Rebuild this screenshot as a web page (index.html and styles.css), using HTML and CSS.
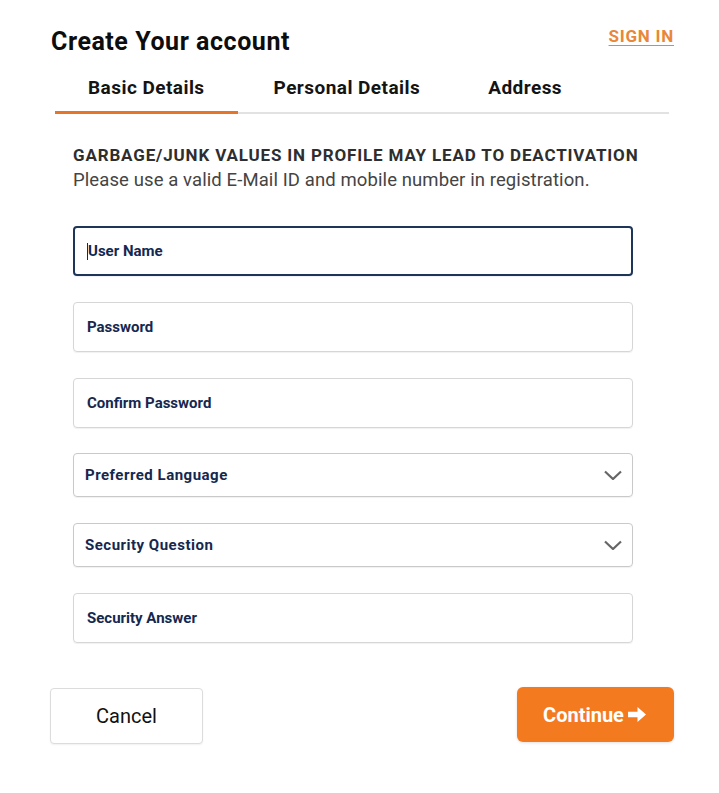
FILE: index.html
```html
<!DOCTYPE html>
<html lang="en">
<head>
<meta charset="utf-8">
<title>Create Your account</title>
<link rel="stylesheet" href="styles.css">
</head>
<body>
<div class="page">
  <header class="head">
    <h1 class="title">Create Your account</h1>
    <a class="signin" href="#">SIGN IN</a>
  </header>
  <nav class="tabs">
    <div class="tab active">Basic Details</div>
    <div class="tab">Personal Details</div>
    <div class="tab">Address</div>
  </nav>
  <section class="form">
    <p class="warn">GARBAGE/JUNK VALUES IN PROFILE MAY LEAD TO DEACTIVATION</p>
    <p class="note">Please use a valid E-Mail ID and mobile number in registration.</p>
    <div class="fields">
      <div class="field tall focus"><span class="caret"></span>User Name</div>
      <div class="field tall">Password</div>
      <div class="field tall">Confirm Password</div>
      <div class="field select first-select">Preferred Language
        <svg class="chev" width="18" height="10" viewBox="0 0 18 10"><path d="M1 1.5 L9 9 L17 1.5" fill="none" stroke="#666" stroke-width="2.2"/></svg>
      </div>
      <div class="field select">Security Question
        <svg class="chev" width="18" height="10" viewBox="0 0 18 10"><path d="M1 1.5 L9 9 L17 1.5" fill="none" stroke="#666" stroke-width="2.2"/></svg>
      </div>
      <div class="field tall">Security Answer</div>
    </div>
  </section>
  <footer class="actions">
    <button class="btn cancel">Cancel</button>
    <button class="btn continue">Continue
      <svg width="21" height="17" viewBox="0 0 22 18"><path d="M1 6 H11 V1 L20 9 L11 17 V12 H1 Z" fill="#fff"/></svg>
    </button>
  </footer>
</div>
</body>
</html>
```
FILE: styles.css
```css
* { box-sizing: border-box; }
html, body { margin: 0; background: #fff; }
body { font-family: Roboto, "Noto Sans", Arial, sans-serif; color: #111; }
.page { width: 719px; height: 793px; padding: 26px 45px 0 51px; }
.head { display: flex; justify-content: space-between; align-items: flex-start; }
.title { margin: 0; font-size: 25px; font-weight: 700; line-height: 32px; letter-spacing: 0.55px; color: #0d0d0d; }
.signin { font-size: 17px; font-weight: 700; color: #e8873a; text-decoration: underline; text-underline-offset: 3px; line-height: 20px; letter-spacing: 0.75px; margin-top: 0; }
.tabs { display: flex; margin: 12px 5px 0 4px; border-bottom: 2px solid #e2e2e2; }
.tab { padding: 6px 33px 11px 33px; font-size: 19px; font-weight: 700; color: #141414; line-height: 24px; letter-spacing: 0.45px; margin-bottom: -2px; border-bottom: 3px solid transparent; }
.tab:nth-child(2) { padding-left: 36px; }
.tab:nth-child(3) { padding-left: 35px; }
.tab.active { border-bottom-color: #e6752a; }
.form { padding: 0 0 0 22px; width: 582px; }
.warn { margin: 31px 0 0; font-size: 17px; font-weight: 700; color: #2e2e2e; letter-spacing: 0.84px; line-height: 20px; white-space: nowrap; }
.note { margin: 4px 0 0; font-size: 18.5px; color: #444; line-height: 22px; letter-spacing: 0.1px; white-space: nowrap; }
.fields { display: flex; flex-direction: column; gap: 26px; margin-top: 35px; width: 560px; }
.field { position: relative; display: flex; align-items: center; border: 1px solid #d6d6d6; border-radius: 4px; padding: 0 13px; font-size: 15px; font-weight: 700; color: #142850; box-shadow: 0 1px 1px rgba(0,0,0,0.06); }
.field.tall { height: 50px; }
.field.select { height: 44px; padding: 0 10px 0 11px; justify-content: space-between; border-color: #c9c9c9; letter-spacing: 0.5px; }
.field.first-select { margin-top: -1px; }
.field.focus { border: 2px solid #1d3557; padding-left: 12px; }
.caret { display: inline-block; width: 1px; height: 17px; background: #142850; }
.actions { display: flex; justify-content: space-between; align-items: flex-start; margin-top: 45px; }
.btn { font-family: Roboto, "Noto Sans", Arial, sans-serif; cursor: pointer; }
.cancel { width: 153px; height: 56px; margin-left: -1px; background: #fff; border: 1px solid #dcdcdc; border-radius: 4px; font-size: 20px; color: #111; box-shadow: 0 1px 2px rgba(0,0,0,0.06); }
.continue { width: 157px; height: 55px; margin-top: -1px; background: #f47a20; border: none; border-radius: 6px; color: #fff; font-size: 20px; font-weight: 700; display: flex; align-items: center; justify-content: center; gap: 3px; box-shadow: 0 1px 3px rgba(0,0,0,0.12); }
```
